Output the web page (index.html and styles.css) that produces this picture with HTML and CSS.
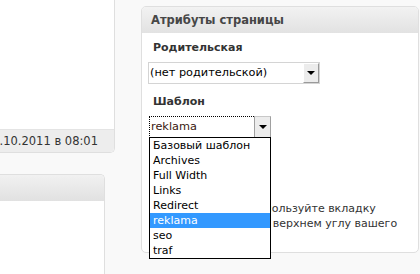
FILE: index.html
```html
<!DOCTYPE html>
<html lang="ru">
  <head>
    <meta charset="UTF-8" />
    <title>Атрибуты страницы</title>
    <link rel="stylesheet" href="styles.css">
  </head>
  <body>
    <div class="page">
      <!-- левая колонка -->
      <div class="side">
        <div class="post-box">
          <div class="post-body"></div>
          <div class="post-foot"><span>Последнее изменение: 14.10.2011 в 08:01</span></div>
        </div>
        <div class="side-box">
          <div class="side-head"></div>
        </div>
      </div>

      <!-- метабокс атрибутов -->
      <div class="metabox">
        <h3 class="metabox-title">Атрибуты страницы</h3>
        <div class="metabox-inside">
          <p class="label first">Родительская</p>
          <div class="select parent">
            <span class="select-text">(нет родительской)</span>
            <span class="select-btn"><i></i></span>
          </div>

          <p class="label">Шаблон</p>
          <div class="select template">
            <span class="select-text focus">reklama</span>
            <span class="select-btn"><i></i></span>
            <!-- раскрытый список -->
            <ul class="dropdown">
              <li>Базовый шаблон</li>
              <li>Archives</li>
              <li>Full Width</li>
              <li>Links</li>
              <li>Redirect</li>
              <li class="selected">reklama</li>
              <li>seo</li>
              <li>traf</li>
            </ul>
          </div>

          <p class="label">Порядок</p>
          <input class="order" type="text" value="0">
          <p class="help">Нужна помощь? Используйте вкладку «Помощь» в правом верхнем углу вашего экрана.</p>
        </div>
      </div>
    </div>
  </body>
</html>
```

FILE: styles.css
```css
/* 초기화 */
html,
body,
ul,
p,
h3 {
  margin: 0;
  padding: 0;
}
ul {
  list-style: none;
}

body {
  background-color: #f9f9f9;
  font-family: "DejaVu Sans", Verdana, sans-serif;
  font-size: 11px;
  color: #333;
  overflow: hidden;
}

.page {
  display: flex;
  align-items: flex-start;
  height: 274px;
}

/* 왼쪽 컬럼 */
.side {
  flex: none;
  width: 115px;
}
.post-box {
  height: 153px;
  box-sizing: border-box;
  display: flex;
  flex-direction: column;
  background-color: #fff;
  border-right: 1px solid #dfdfdf;
  border-bottom: 1px solid #dfdfdf;
  border-bottom-right-radius: 5px;
  overflow: hidden;
}
.post-body {
  flex: 1;
}
.post-foot {
  height: 22px;
  display: flex;
  justify-content: flex-end;
  align-items: center;
  padding-right: 16px;
  background-color: #ededed;
  border-top: 1px solid #e4e4e4;
  white-space: nowrap;
  overflow: hidden;
  font-size: 11.5px;
  color: #333;
}
.post-foot span {
  flex: none;
}

.side-box {
  width: 105px;
  height: 100px;
  margin-top: 21px;
  box-sizing: border-box;
  background-color: #fff;
  border-top: 1px solid #dfdfdf;
  border-right: 1px solid #dfdfdf;
  border-top-right-radius: 5px;
  overflow: hidden;
}
.side-head {
  height: 26px;
  background: linear-gradient(#f1f1f1, #e1e1e1);
}

/* 메타박스 */
.metabox {
  flex: none;
  width: 278px;
  height: 247px;
  margin: 6px 0 0 26px;
  box-sizing: border-box;
  background-color: #fff;
  border: 1px solid #dfdfdf;
  border-radius: 5px;
}
.metabox-title {
  height: 26px;
  padding-left: 9px;
  line-height: 26px;
  font-size: 11.5px;
  color: #464646;
  background: linear-gradient(#f2f2f2, #e2e2e2);
  border-radius: 4px 4px 0 0;
}
.metabox-inside {
  padding: 0 6px;
}
.label {
  padding-left: 5px;
  margin-top: 9px;
  line-height: 17px;
  font-weight: bold;
  font-size: 11px;
  color: #333;
}
.label.first {
  margin-top: 6px;
}

/* 셀렉트 */
.select {
  position: relative;
  display: flex;
  box-sizing: border-box;
  height: 22px;
  margin-top: 6px;
  color: #000;
  font-size: 11.3px;
}
.select.parent {
  width: 172px;
  border: 1px solid #d4d4d4;
}
.select.template {
  width: 122px;
  margin-left: 1px;
}
.select-text {
  flex: 1;
  padding-left: 1px;
  line-height: 20px;
  white-space: nowrap;
}
.select-text.focus {
  border: 1px dotted #000;
  border-right: 0;
  line-height: 19px;
  color: #3a2010;
}
.select-btn {
  flex: none;
  width: 14px;
  display: flex;
  justify-content: center;
  align-items: center;
  background-color: #ececec;
  border: 1px solid #fff;
  border-right-color: #9a9a9a;
  border-bottom-color: #9a9a9a;
}
.template .select-btn {
  width: 15px;
  border: 1px solid #a0a0a0;
  border-top-color: #c8c8c8;
}
.select-btn i {
  width: 0;
  height: 0;
  border-left: 4px solid transparent;
  border-right: 4px solid transparent;
  border-top: 4px solid #000;
}

/* 드롭다운 목록 */
.dropdown {
  position: absolute;
  top: 21px;
  left: 0;
  z-index: 10;
  width: 122px;
  box-sizing: border-box;
  background-color: #fff;
  border: 1px solid #000;
}
.dropdown li {
  height: 15px;
  padding-left: 3px;
  line-height: 15px;
  font-size: 11px;
  color: #000;
}
.dropdown li.selected {
  background-color: #3399ff;
  color: #fff;
}

.order {
  display: block;
  box-sizing: border-box;
  width: 30px;
  height: 18px;
  margin: 4px 0 0 5px;
  font-size: 11px;
}
.help {
  margin-top: 15px;
  padding: 0 4px 0 5px;
  line-height: 15px;
  font-size: 11px;
  color: #333;
}
```
